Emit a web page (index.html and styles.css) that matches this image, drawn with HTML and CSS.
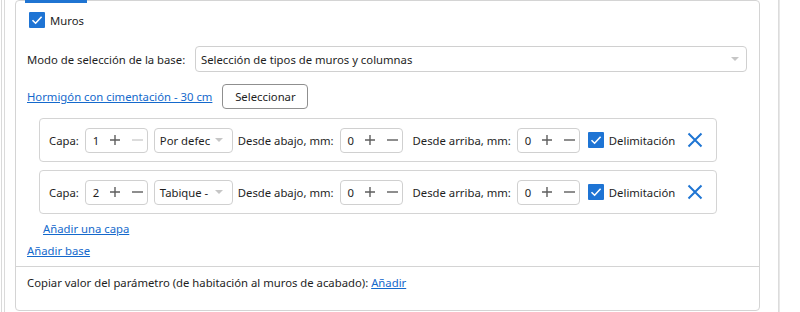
FILE: index.html
```html
<!DOCTYPE html>
<html lang="es">
<head>
<meta charset="utf-8">
<link rel="stylesheet" href="styles.css">
</head>
<body>
<div class="page">
  <div class="rail"><div class="rail-inner">
    <div class="card">
      <div class="tab-indicator"></div>
      <div class="content">
        <label class="check-row">
          <span class="checkbox"><svg viewBox="0 0 16 16" width="16" height="16"><path d="M3.5 8.2 L6.6 11.2 L12.6 4.8" fill="none" stroke="#fff" stroke-width="1.6"/></svg></span>
          <span>Muros</span>
        </label>
        <div class="mode-row">
          <span class="mode-label">Modo de selección de la base:</span>
          <div class="select wide"><span class="select-text">Selección de tipos de muros y columnas</span><span class="arrow"></span></div>
        </div>
        <div class="base-row">
          <a class="link" href="#">Hormigón con cimentación - 30 cm</a>
          <button class="btn">Seleccionar</button>
        </div>
        <div class="layers">
          <div class="layer">
            <span class="lbl">Capa:</span>
            <div class="spin"><span class="num">1</span><svg class="plus" viewBox="0 0 10 10"><path d="M0 5H10M5 0V10"/></svg><svg class="minus disabled" viewBox="0 0 11 10"><path d="M0 5H11"/></svg></div>
            <div class="select small"><span class="select-text">Por defec</span><span class="arrow"></span></div>
            <span class="lbl l2">Desde abajo, mm:</span>
            <div class="spin"><span class="num">0</span><svg class="plus" viewBox="0 0 10 10"><path d="M0 5H10M5 0V10"/></svg><svg class="minus" viewBox="0 0 11 10"><path d="M0 5H11"/></svg></div>
            <span class="lbl l3">Desde arriba, mm:</span>
            <div class="spin"><span class="num">0</span><svg class="plus" viewBox="0 0 10 10"><path d="M0 5H10M5 0V10"/></svg><svg class="minus" viewBox="0 0 11 10"><path d="M0 5H11"/></svg></div>
            <span class="checkbox cb2"><svg viewBox="0 0 16 16" width="16" height="16"><path d="M3.5 8.2 L6.6 11.2 L12.6 4.8" fill="none" stroke="#fff" stroke-width="1.6"/></svg></span>
            <span class="lbl l4">Delimitación</span>
            <svg class="close" viewBox="0 0 16 16" width="16" height="16"><path d="M1.5 1.5 L14.5 14.5 M14.5 1.5 L1.5 14.5" stroke="#1f75d3" stroke-width="2" fill="none"/></svg>
          </div>
          <div class="layer">
            <span class="lbl">Capa:</span>
            <div class="spin"><span class="num">2</span><svg class="plus" viewBox="0 0 10 10"><path d="M0 5H10M5 0V10"/></svg><svg class="minus" viewBox="0 0 11 10"><path d="M0 5H11"/></svg></div>
            <div class="select small"><span class="select-text">Tabique -</span><span class="arrow"></span></div>
            <span class="lbl l2">Desde abajo, mm:</span>
            <div class="spin"><span class="num">0</span><svg class="plus" viewBox="0 0 10 10"><path d="M0 5H10M5 0V10"/></svg><svg class="minus" viewBox="0 0 11 10"><path d="M0 5H11"/></svg></div>
            <span class="lbl l3">Desde arriba, mm:</span>
            <div class="spin"><span class="num">0</span><svg class="plus" viewBox="0 0 10 10"><path d="M0 5H10M5 0V10"/></svg><svg class="minus" viewBox="0 0 11 10"><path d="M0 5H11"/></svg></div>
            <span class="checkbox cb2"><svg viewBox="0 0 16 16" width="16" height="16"><path d="M3.5 8.2 L6.6 11.2 L12.6 4.8" fill="none" stroke="#fff" stroke-width="1.6"/></svg></span>
            <span class="lbl l4">Delimitación</span>
            <svg class="close" viewBox="0 0 16 16" width="16" height="16"><path d="M1.5 1.5 L14.5 14.5 M14.5 1.5 L1.5 14.5" stroke="#1f75d3" stroke-width="2" fill="none"/></svg>
          </div>
        </div>
        <a class="link add-layer" href="#">Añadir una capa</a>
        <a class="link add-base" href="#">Añadir base</a>
      </div>
      <div class="footer">
        Copiar valor del parámetro (de habitación al muros de acabado): <a class="link" href="#">Añadir</a>
      </div>
    </div>
  </div></div>
  <div class="scroll-edge"></div>
</div>
</body>
</html>
```
FILE: styles.css
```css
* { box-sizing: border-box; }
html, body { margin: 0; padding: 0; background: #fff; }
body {
  font-family: "Noto Sans", "Open Sans", sans-serif;
  font-size: 11.3px;
  color: #1e1e1e;
  width: 800px;
  height: 312px;
  overflow: hidden;
  white-space: nowrap;
}
.page { display: flex; height: 312px; }
.rail { margin-left: 1px; border-left: 1px solid #dadada; padding-left: 2px; flex: none; }
.rail-inner { border-left: 1px solid #dadada; padding-left: 10px; height: 312px; }
.card {
  position: relative;
  width: 745px;
  height: 311px;
  border: 1px solid #d4d4d4;
  border-radius: 4px;
  display: flex;
  flex-direction: column;
}
.tab-indicator {
  position: absolute;
  top: -1px; left: 9px;
  width: 62px; height: 3px;
  background: #1f74d2;
}
.content { padding: 9px 0 0 11px; display: flex; flex-direction: column; align-items: flex-start; }
.check-row { display: flex; align-items: center; height: 20px; gap: 5px; padding-left: 2px; }
.checkbox {
  width: 16px; height: 16px; background: #1e74d4; border-radius: 1px;
  display: inline-flex; flex: none;
}
.mode-row { display: flex; align-items: center; margin-top: 16px; }
.mode-label { width: 168px; flex: none; }
.select {
  position: relative;
  display: flex; align-items: center;
  height: 26px;
  border: 1px solid #d0d0d0;
  border-radius: 4px;
  padding-left: 5px;
  background: #fff;
  flex: none;
}
.select.wide { width: 552px; }
.select.small { width: 79px; height: 25px; margin-left: 6px; }
.arrow {
  position: absolute; right: 7px; top: 50%;
  margin-top: -2px;
  width: 0; height: 0;
  border-left: 4px solid transparent; border-right: 4px solid transparent;
  border-top: 4px solid #c6c6c6;
}
.select.small .arrow { right: 9px; }
.base-row { display: flex; align-items: center; margin-top: 12px; height: 25px; }
.link { color: #1469cc; text-decoration: underline; }
.btn {
  margin-left: 10px;
  height: 25px; width: 86px;
  font: inherit; color: #1e1e1e;
  background: #fff;
  border: 1px solid #8f8f8f;
  border-radius: 4px;
  padding: 0;
  flex: none;
}
.layers { margin-top: 9px; margin-left: 12px; display: flex; flex-direction: column; gap: 8px; }
.layer {
  width: 678px; height: 44px;
  border: 1px solid #d4d4d4; border-radius: 4px;
  display: flex; align-items: center;
  padding-left: 9px;
}
.lbl { flex: none; }
.spin {
  display: flex; align-items: center;
  width: 63px; height: 25px;
  border: 1px solid #d0d0d0; border-radius: 4px;
  padding-left: 7px;
  margin-left: 6px;
  flex: none;
}
.num { width: 13px; }
.plus { width: 10px; height: 10px; margin-left: 4px; flex: none; }
.minus { width: 11px; height: 10px; margin-left: 12px; flex: none; }
.plus path, .minus path { stroke: #5e5e5e; stroke-width: 1.4; fill: none; }
.minus.disabled path { stroke: #cdcdcd; }
.l2 { margin-left: 5px; }
.l3 { margin-left: 10px; }
.cb2 { margin-left: 8px; }
.l4 { margin-left: 5px; }
.close { margin-left: 12px; width: 16px; height: 16px; flex: none; }
.add-layer { margin-top: 7px; margin-left: 16px; line-height: 16px; }
.add-base { margin-top: 6px; line-height: 16px; }
.footer {
  margin-top: 7px;
  border-top: 1px solid #d4d4d4;
  padding: 8px 0 0 11px;
  line-height: 16px;
}
.scroll-edge { margin-left: 18px; width: 2px; border-left: 1px solid #dcdcdc; border-right: 1px solid #e8e8e8; height: 312px; flex: none; }
```
